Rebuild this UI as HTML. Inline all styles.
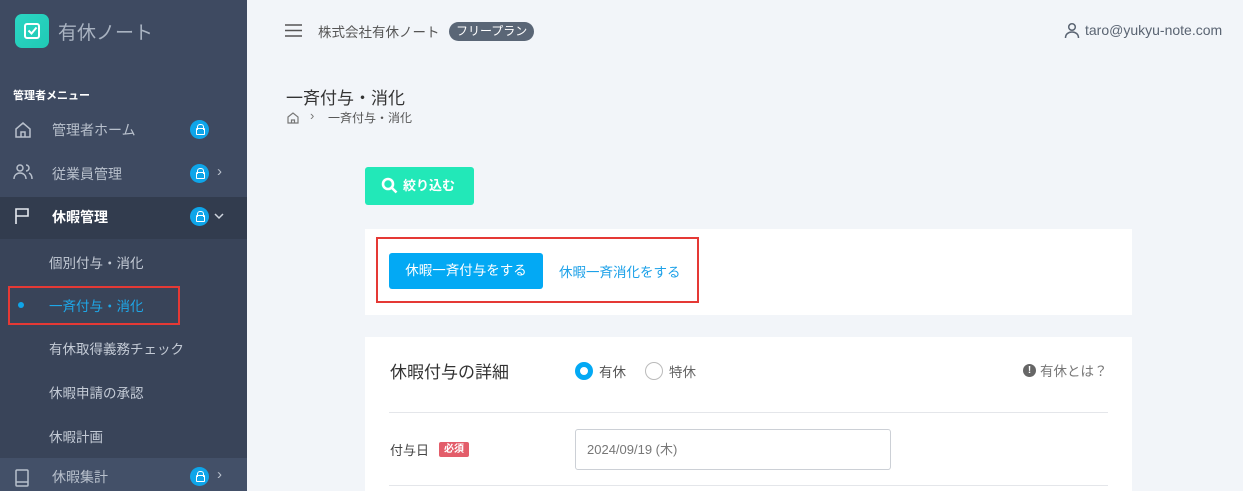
<!DOCTYPE html>
<html><head><meta charset="utf-8"><style>
*{box-sizing:border-box;margin:0;padding:0}
body{width:1243px;height:491px;overflow:hidden;background:#f2f5f9;font-family:"Liberation Sans","Noto Sans CJK JP",sans-serif;position:relative}
.sb{position:absolute;left:0;top:0;width:247px;height:491px;background:#3e4a61}
.abs{position:absolute}
.logo{left:15px;top:14px;width:34px;height:34px;border-radius:7px;background:linear-gradient(135deg,#2bd6c3,#20c9b5)}
.lock{width:19px;height:19px;border-radius:50%;background:#0ea5e9;position:absolute}
.lock:after{content:"";position:absolute;left:6px;top:8px;width:7px;height:5px;border:1.5px solid #fff;border-radius:1px}
.lock:before{content:"";position:absolute;left:7px;top:4px;width:5px;height:5px;border:1.5px solid #fff;border-bottom:none;border-radius:3px 3px 0 0}
.mi{color:#b8c0cc;font-size:14px}
.sub{color:#c3cad5;font-size:13.5px;left:49px}
.card{background:#fff;position:absolute;left:365px;width:767px}
</style></head><body>
<div class="sb">
 <div class="abs logo"><svg width="34" height="34" viewBox="0 0 34 34"><rect x="10" y="10" width="14" height="14" rx="2" fill="none" stroke="#fff" stroke-width="2"/><path d="M13.5 16.5l3 3 5-6" fill="none" stroke="#fff" stroke-width="2"/></svg></div>
 <div class="abs" style="left:58px;top:18px;color:#a9b3c1;font-size:19px">有休ノート</div>
 <div class="abs" style="left:13px;top:87px;color:#fff;font-size:11px;font-weight:bold">管理者メニュー</div>
 <svg class="abs" style="left:14px;top:121px" width="18" height="18" viewBox="0 0 18 18" fill="none" stroke="#b8c0cc" stroke-width="1.5"><path d="M2 8l7-6 7 6v8H2z M7 16v-5h4v5"/></svg>
 <div class="abs mi" style="left:52px;top:120px">管理者ホーム</div><div class="lock" style="left:190px;top:120px"></div>
 <svg class="abs" style="left:13px;top:163px" width="20" height="18" viewBox="0 0 20 18" fill="none" stroke="#b8c0cc" stroke-width="1.5"><circle cx="7" cy="5" r="3"/><path d="M1 16c0-4 3-6 6-6s6 2 6 6M13 2a3 3 0 010 6M16 10c2 1 3 3 3 6"/></svg>
 <div class="abs mi" style="left:52px;top:164px">従業員管理</div><div class="lock" style="left:190px;top:164px"></div>
 <div class="abs" style="left:217px;top:163px;color:#b8c0cc;font-size:15px">›</div>
 <div class="abs" style="left:0;top:197px;width:247px;height:42px;background:#323c4e"></div>
 <svg class="abs" style="left:14px;top:207px" width="16" height="18" viewBox="0 0 16 18" fill="none" stroke="#e5e9ef" stroke-width="1.6"><path d="M2 17V2h12v7H2"/></svg>
 <div class="abs" style="left:52px;top:207px;color:#fff;font-size:14px;font-weight:bold">休暇管理</div><div class="lock" style="left:190px;top:207px"></div>
 <svg class="abs" style="left:214px;top:213px" width="10" height="7" viewBox="0 0 10 7" fill="none" stroke="#cfd5de" stroke-width="1.5"><path d="M1 1l4 4 4-4"/></svg>
 <div class="abs" style="left:0;top:239px;width:247px;height:219px;background:#394459"></div>
 <div class="abs sub" style="top:252px">個別付与・消化</div>
 <div class="abs" style="left:8px;top:286px;width:172px;height:39px;border:2px solid #e53935"></div>
 <div class="abs" style="left:18px;top:302px;width:6px;height:6px;border-radius:50%;background:#0ea5e9"></div>
 <div class="abs sub" style="top:295px;color:#1ea7e8">一斉付与・消化</div>
 <div class="abs sub" style="top:338px">有休取得義務チェック</div>
 <div class="abs sub" style="top:382px">休暇申請の承認</div>
 <div class="abs sub" style="top:426px">休暇計画</div>
 <div class="abs" style="left:0;top:458px;width:247px;height:33px;background:#435068"></div>
 <svg class="abs" style="left:14px;top:468px" width="16" height="20" viewBox="0 0 16 20" fill="none" stroke="#b8c0cc" stroke-width="1.5"><rect x="2" y="2" width="12" height="16" rx="1"/><path d="M2 14h12"/></svg>
 <div class="abs mi" style="left:52px;top:467px">休暇集計</div><div class="lock" style="left:190px;top:467px"></div>
 <div class="abs" style="left:217px;top:466px;color:#b8c0cc;font-size:15px">›</div>
</div>
<svg class="abs" style="left:285px;top:24px" width="17" height="13" viewBox="0 0 17 13" stroke="#555" stroke-width="1.6"><path d="M0 1h17M0 6.5h17M0 12h17"/></svg>
<div class="abs" style="left:318px;top:21px;color:#555;font-size:13.5px">株式会社有休ノート</div>
<div class="abs" style="left:449px;top:22px;height:19px;padding:0 7px;border-radius:10px;background:#5a6676;color:#fff;font-size:12px;line-height:19px">フリープラン</div>
<svg class="abs" style="left:1064px;top:22px" width="16" height="17" viewBox="0 0 16 17" fill="none" stroke="#5a6472" stroke-width="1.5"><circle cx="8" cy="5" r="3.3"/><path d="M1.5 16c0-4 3-6 6.5-6s6.5 2 6.5 6"/></svg>
<div class="abs" style="left:1085px;top:22px;color:#5a6472;font-size:14px">taro@yukyu-note.com</div>
<div class="abs" style="left:286px;top:84px;color:#333;font-size:17px">一斉付与・消化</div>
<svg class="abs" style="left:287px;top:112px" width="12" height="12" viewBox="0 0 12 12" fill="none" stroke="#777" stroke-width="1.2"><path d="M1 5l5-4 5 4v6H1z M4.5 11V8h3v3"/></svg>
<div class="abs" style="left:310px;top:108px;color:#777;font-size:13px">›</div>
<div class="abs" style="left:328px;top:109px;color:#555;font-size:12px">一斉付与・消化</div>
<div class="abs" style="left:365px;top:167px;width:109px;height:38px;border-radius:3px;background:#22e8b8;color:#fff;font-size:13px;font-weight:bold;line-height:38px;padding-left:38px">絞り込む</div>
<svg class="abs" style="left:381px;top:177px" width="17" height="17" viewBox="0 0 17 17" fill="none" stroke="#fff" stroke-width="2.6"><circle cx="7" cy="7" r="5"/><path d="M10.5 10.5l5 5"/></svg>
<div class="card" style="top:229px;height:86px"></div>
<div class="abs" style="left:376px;top:237px;width:323px;height:66px;border:2.5px solid #e53935"></div>
<div class="abs" style="left:389px;top:253px;width:154px;height:36px;border-radius:3px;background:#03a9f4;color:#fff;font-size:13.5px;line-height:36px;text-align:center">休暇一斉付与をする</div>
<div class="abs" style="left:559px;top:261px;color:#1da1e8;font-size:13.5px">休暇一斉消化をする</div>
<div class="card" style="top:337px;height:154px"></div>
<div class="abs" style="left:390px;top:358px;color:#333;font-size:17px">休暇付与の詳細</div>
<div class="abs" style="left:575px;top:362px;width:18px;height:18px;border-radius:50%;border:5px solid #03a9f4;background:#fff"></div>
<div class="abs" style="left:599px;top:361px;color:#555;font-size:13.5px">有休</div>
<div class="abs" style="left:645px;top:362px;width:18px;height:18px;border-radius:50%;border:1px solid #bbb"></div>
<div class="abs" style="left:669px;top:361px;color:#666;font-size:13.5px">特休</div>
<div class="abs" style="left:1023px;top:364px;width:13px;height:13px;border-radius:50%;background:#666;color:#fff;font-size:10px;font-weight:bold;text-align:center;line-height:13px">!</div>
<div class="abs" style="left:1040px;top:360px;color:#777;font-size:13.5px">有休とは？</div>
<div class="abs" style="left:389px;top:412px;width:719px;height:1px;background:#e4e6ea"></div>
<div class="abs" style="left:390px;top:440px;color:#444;font-size:13px">付与日</div>
<div class="abs" style="left:439px;top:442px;width:30px;height:15px;border-radius:2px;background:#e35d6a;color:#fff;font-size:10px;font-weight:bold;line-height:15px;text-align:center">必須</div>
<div class="abs" style="left:575px;top:429px;width:316px;height:41px;border:1px solid #ccd0d6;border-radius:3px;color:#777;font-size:13px;line-height:39px;padding-left:11px">2024/09/19 (木)</div>
<div class="abs" style="left:389px;top:485px;width:719px;height:1px;background:#e4e6ea"></div>
</body></html>
